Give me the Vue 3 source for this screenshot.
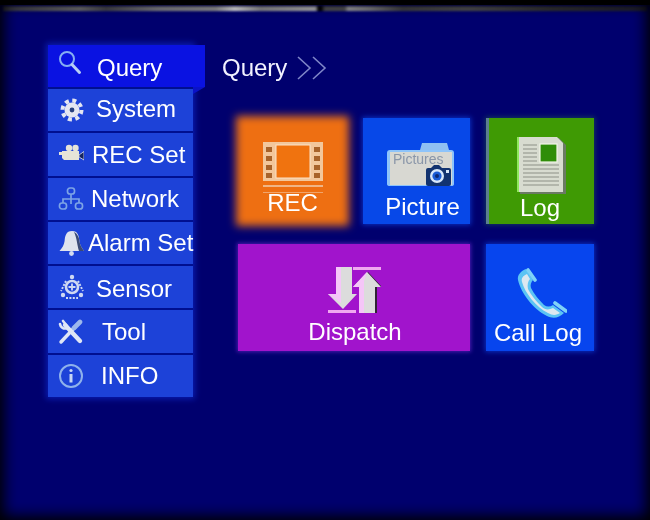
<script setup>
const menu = [
  { id: 'query', label: 'Query' },
  { id: 'system', label: 'System' },
  { id: 'rec', label: 'REC Set' },
  { id: 'network', label: 'Network' },
  { id: 'alarm', label: 'Alarm Set' },
  { id: 'sensor', label: 'Sensor' },
  { id: 'tool', label: 'Tool' },
  { id: 'info', label: 'INFO' }
]
</script>

<template>
  <div class="screen">
    <div class="content">
      <nav class="side">
        <div v-for="m in menu" :key="m.id" class="row" :class="'row-' + m.id">
          <svg class="ico" viewBox="0 0 26 26">
            <g v-if="m.id === 'query'" fill="none" stroke="#86aef2">
              <circle cx="9" cy="8" r="7" stroke-width="2" />
              <path d="M14 13.5 L21.5 21.5" stroke-width="3" stroke-linecap="round" stroke="#b8cdf5" />
            </g>
            <g v-else-if="m.id === 'system'">
              <circle cx="14" cy="13" r="7.5" fill="#e4e6f2" />
              <circle cx="14" cy="13" r="9.5" fill="none" stroke="#e4e6f2" stroke-width="4" stroke-dasharray="4 3.46" />
              <circle cx="14" cy="13" r="2.4" fill="#27407f" />
            </g>
            <g v-else-if="m.id === 'rec'" fill="#e6e4d8">
              <circle cx="11" cy="7" r="3.2" />
              <circle cx="17.5" cy="7" r="3.2" />
              <path d="M4 10 H21 V19 H6 L4 17 Z" />
              <path d="M1 11 H4 V14 H1 Z" />
              <path d="M21 14 L26 10.5 V19 L21 16 Z" fill="#14245f" stroke="#dfe3f0" stroke-width=".8" />
            </g>
            <g v-else-if="m.id === 'network'" fill="none" stroke="#7da4e6" stroke-width="1.7">
              <rect x="9.5" y="2" width="7" height="6" rx="2.5" />
              <rect x="1.5" y="17" width="7" height="6" rx="2.5" />
              <rect x="17.5" y="17" width="7" height="6" rx="2.5" />
              <path d="M13 8 V13 M5 17 V13 H21 V17 M13 13 V18" />
            </g>
            <g v-else-if="m.id === 'alarm'">
              <path d="M14 1 C8 1 7 6 6.6 11 C6.2 15 4 18 1.5 21 H26 C24 18 21.8 15 21.4 11 C21 6 20 1 14 1 Z" fill="#dfe3ee" />
              <path d="M16 2 C20 4 21 8 21.4 11 C21.8 15 24 18 26 21 H21 C19 15 19 8 16 2 Z" fill="#3a4a78" />
              <circle cx="13.5" cy="23.5" r="2.4" fill="#d3dcf0" />
            </g>
            <g v-else-if="m.id === 'sensor'" fill="none" stroke="#cfd9f3">
              <circle cx="14" cy="13" r="6" stroke-width="2.6" />
              <path d="M14 9.5 V16.5 M10.5 13 H17.5" stroke-width="1.8" />
              <circle cx="14" cy="3" r="2.2" fill="#cfd9f3" stroke="none" />
              <circle cx="5" cy="21" r="2.2" fill="#cfd9f3" stroke="none" />
              <circle cx="23" cy="21" r="2.2" fill="#cfd9f3" stroke="none" />
              <path d="M8 7 L3 17 M20 7 L25 17 M8 24 H20" stroke-width="2" stroke-dasharray="2 1.4" />
            </g>
            <g v-else-if="m.id === 'tool'" stroke-linecap="round" fill="none">
              <path d="M7 6 L22 22" stroke="#dfe6f6" stroke-width="4.4" />
              <path d="M2 5 A5 5 0 0 0 9 9 M5 2 L9 7" stroke="#dfe6f6" stroke-width="2.6" />
              <path d="M3 23 L17 8" stroke="#dfe6f6" stroke-width="3.4" />
              <path d="M16 9 L22 3" stroke="#9db8ec" stroke-width="4.6" />
            </g>
            <g v-else fill="none" stroke="#8fb2ec">
              <circle cx="13" cy="13" r="11" stroke-width="2" />
              <circle cx="13" cy="7.5" r="1.6" fill="#c6d6f5" stroke="none" />
              <path d="M13 11 V19.5" stroke="#c6d6f5" stroke-width="3" />
            </g>
          </svg>
          <span class="label">{{ m.label }}</span>
        </div>
      </nav>

      <main class="main">
        <header class="crumb">
          <span>Query</span>
          <svg class="chev" viewBox="0 0 32 24" fill="none" stroke="#7f86c8" stroke-width="1.6">
            <path d="M2 1 L14 12 L2 23 M17 1 L29 12 L17 23" />
          </svg>
        </header>

        <section class="grid">
          <div class="tile t-rec">
            <svg class="i-rec" viewBox="0 0 62 51">
              <rect x="1" y="0" width="60" height="39" fill="#f2c79c" />
              <rect x="14" y="3" width="34" height="33" fill="#f0730f" stroke="#fbe3c8" stroke-width="1" />
              <g fill="#a8632a">
                <rect x="4" y="5" width="6" height="5" /><rect x="4" y="14" width="6" height="5" />
                <rect x="4" y="23" width="6" height="5" /><rect x="4" y="31" width="6" height="5" />
                <rect x="52" y="5" width="6" height="5" /><rect x="52" y="14" width="6" height="5" />
                <rect x="52" y="23" width="6" height="5" /><rect x="52" y="31" width="6" height="5" />
              </g>
              <rect x="1" y="43" width="60" height="2" fill="#f0b585" />
              <rect x="1" y="50" width="60" height="1" fill="#f0a56c" />
            </svg>
            <span class="tl">REC</span>
          </div>

          <div class="tile t-pic">
            <svg class="i-pic" viewBox="0 0 67 44">
              <path d="M35 0 H60 L62 7 H33 Z" fill="#8fc0f2" />
              <path d="M3 7 H64 Q67 7 67 10 V41 Q67 43 64 43 H3 Q0 43 0 41 V10 Q0 7 3 7 Z" fill="#8ec4fa" />
              <rect x="3" y="9" width="62" height="33" fill="#d8d8d2" />
              <text x="6" y="21" class="pic-word">Pictures</text>
              <rect x="39" y="25" width="25" height="18" rx="2" fill="#12336f" />
              <path d="M44 25 L47 22 H52 L55 25 Z" fill="#12336f" />
              <circle cx="50" cy="33" r="7" fill="#d8e8fa" />
              <circle cx="50" cy="33" r="4.6" fill="#1a5cd6" />
              <circle cx="50" cy="33" r="2" fill="#0c2a72" />
              <rect x="59" y="27" width="3" height="3" fill="#d8e8fa" />
            </svg>
            <span class="tl">Picture</span>
          </div>

          <div class="tile t-log">
            <svg class="i-log" viewBox="0 0 49 57">
              <path d="M3 1 H42 L49 8 V57 H3 Z" fill="#6b7a64" />
              <path d="M0 0 H40 L46 6 V55 H0 Z" fill="#d8dcd0" />
              <rect x="0" y="0" width="2" height="55" fill="#8ee85c" />
              <g stroke="#8b8f86" stroke-width="1.2">
                <path d="M6 8 H20 M6 12 H20 M6 16 H20 M6 20 H20 M6 24 H20 M6 28 H42 M6 32 H42 M6 36 H42 M6 40 H42 M6 44 H42 M6 48 H42" />
              </g>
              <rect x="23" y="7" width="17" height="18" fill="#2f8d08" stroke="#f2f5e8" stroke-width="1.2" />
            </svg>
            <span class="tl">Log</span>
          </div>

          <div class="tile t-dis">
            <svg class="i-dis" viewBox="0 0 53 46">
              <path d="M8 0 H24 V27 H29 L15 42 L0 27 H8 Z" fill="#dcdcdc" />
              <path d="M8 0 H13 V36 L0 27 H8 Z" fill="#f5c6f8" />
              <rect x="0" y="43" width="28" height="3" fill="#f0a8f0" />
              <rect x="25" y="0" width="28" height="3" fill="#f0a8f0" />
              <path d="M40 5 L54 20 H49 V46 H33 V20 H26 Z" fill="#302434" />
              <path d="M39 5 L25 20 H31 V46 H47 V20 H53 Z" fill="#dcdcdc" />
              <path d="M39 5 L25 20 H31 V46 H36 V14 Z" fill="#f5c6f8" />
            </svg>
            <span class="tl">Dispatch</span>
          </div>

          <div class="tile t-call">
            <svg class="i-call" viewBox="0 0 50 52">
              <path d="M9 1 C4 3 0 7 1 12 C4 25 16 41 30 48 C36 51 42 50 47 45 L36 37 C33 39 30 39 27 37 C22 32 17 26 14 20 C13 17 14 14 16 12 Z" fill="#5cc4f4" />
              <path d="M10 6 C6 8 4 10 5 14 C8 25 19 39 31 45 C36 48 40 47 43 45 L36 40 C32 42 28 42 25 39 C20 34 14 27 11 21 C10 17 11 13 13 11 Z" fill="#dce8f0" />
              <path d="M11 2 L18 12 M38 35 L49 43" stroke="#7fd2f7" stroke-width="3.6" stroke-linecap="round" fill="none" />
            </svg>
            <span class="tl">Call Log</span>
          </div>
        </section>
      </main>
    </div>
    <div class="streak"></div>
    <div class="vignette"></div>
  </div>
</template>

<style scoped>
.screen {
  position: relative;
  width: 650px;
  height: 520px;
  overflow: hidden;
  background: #00006e;
  font-family: "Liberation Sans", Arial, sans-serif;
  color: #fff;
}
.content {
  display: flex;
  padding: 45px 0 0 48px;
  filter: blur(0.45px);
}
.side {
  width: 145px;
  height: 352px;
  display: flex;
  flex-direction: column;
  gap: 2px;
  background: #000f90;
  box-shadow: 0 0 6px 2px #0a1cb0;
}
.row {
  flex: 1;
  display: flex;
  align-items: center;
  padding-left: 10px;
  background: #1d42d8;
  font-size: 24px;
  white-space: nowrap;
}
.ico {
  width: 26px;
  height: 26px;
  flex: none;
}
.label { display: block; }
.row-query {
  position: relative;
  box-sizing: border-box;
  width: 157px;
  flex: none;
  height: 42px;
  background: #0a12e2;
}
.row-query::after {
  content: "";
  position: absolute;
  left: 145px;
  top: 42px;
  border-top: 7px solid #0a12c8;
  border-right: 12px solid transparent;
}
.row-query .ico { margin-top: -4px; }
.row-query .label { margin-left: 13px; margin-top: 3px; }
.row-system .label { margin-left: 12px; margin-top: -3px; }
.row-rec .label { margin-left: 8px; margin-top: 1px; }
.row-network .label { margin-left: 7px; }
.row-alarm .label { margin-left: 4px; }
.row-sensor .label { margin-left: 12px; margin-top: 4px; }
.row-tool .label { margin-left: 18px; }
.row-info .label { margin-left: 17px; }

.main {
  margin-left: 29px;
  flex: 1;
}
.crumb {
  height: 46px;
  display: flex;
  align-items: center;
  font-size: 24px;
  gap: 9px;
  color: #f2f2ff;
}
.chev {
  width: 32px;
  height: 24px;
}
.grid {
  margin: 27px 0 0 16px;
  display: grid;
  grid-template-columns: 109px 107px 108px;
  grid-template-rows: 106px 107px;
  column-gap: 16px;
  row-gap: 20px;
}
.tile {
  display: flex;
  flex-direction: column;
  align-items: center;
  font-size: 24px;
}
.tl {
  line-height: 28px;
  white-space: nowrap;
}
.tile svg { display: block; flex: none; }
.t-rec {
  position: relative;
  isolation: isolate;
  padding-top: 24px;
}
.t-rec::before {
  content: "";
  position: absolute;
  inset: -2px;
  z-index: -1;
  background: #ee6f12;
  filter: blur(4px);
}
.i-rec { width: 62px; height: 51px; }
.t-rec .tl { margin-top: -4px; }
.t-pic {
  background: #0748e8;
  padding-top: 25px;
  box-shadow: 0 0 5px 1px #0a2fc0;
}
.i-pic { width: 67px; height: 44px; margin-left: 7px; }
.t-pic .tl { margin-top: 6px; margin-left: 12px; }
.pic-word {
  font-family: "Liberation Sans", Arial, sans-serif;
  font-size: 14px;
  fill: #8a96a8;
}
.t-log {
  background: #3f9a04;
  box-shadow: inset 3px 0 0 #5c7f8f, 0 0 5px 1px #123a5c;
  padding-top: 19px;
}
.i-log { width: 49px; height: 57px; margin-left: 2px; }
.t-dis {
  grid-column: 1 / span 2;
  background: #a114cc;
  box-shadow: 0 0 4px 1px #4a1ab0;
  padding-top: 23px;
}
.i-dis { width: 53px; height: 46px; }
.t-dis .tl { margin-top: 5px; margin-left: 2px; }
.t-call {
  background: #0745ee;
  box-shadow: 0 0 5px 1px #0a2fc0;
  padding-top: 24px;
}
.i-call { width: 50px; height: 52px; margin-left: 4px; }
.t-call .tl { margin-top: -1px; margin-right: 4px; }

.streak {
  position: absolute;
  left: 3px;
  right: 3px;
  top: 6px;
  height: 5px;
  filter: blur(1.2px);
  background: linear-gradient(90deg, #3a3a44 0%, #777 12%, #4a4a50 16%, #8a8a8e 24%, #a0a0a0 33%, #f4f4f4 36%, #9a9a9a 40%, #c0c0c0 48.5%, #000 49%, #000 49.4%, #555 50%, #555 53%, #a8a8a8 53.6%, #888 57%, #444 62%, #555 72%, #333 85%, #202030 100%);
}
.vignette {
  position: absolute;
  inset: 0;
  pointer-events: none;
  background: linear-gradient(#000 0, #000 5px, transparent 5px);
  box-shadow: inset 0 0 14px 4px #000;
}
</style>
